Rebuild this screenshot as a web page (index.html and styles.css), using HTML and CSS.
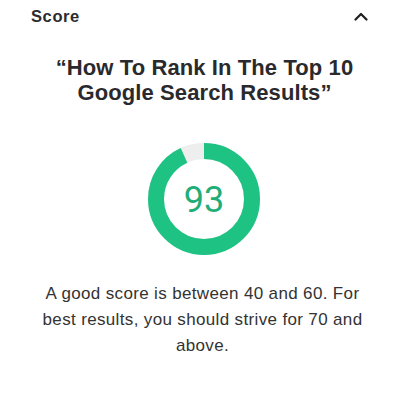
FILE: index.html
```html
<!DOCTYPE html>
<html>
<head>
<meta charset="utf-8">
<link rel="stylesheet" href="styles.css">
</head>
<body>
<div class="panel">
  <div class="header">
    <span class="label">Score</span>
    <svg class="chevron" width="14" height="9" viewBox="0 0 14 9"><path d="M1.5 7.5 L7 2 L12.5 7.5" fill="none" stroke="#1e1e1e" stroke-width="2.2" stroke-linecap="round" stroke-linejoin="round"/></svg>
  </div>
  <h2 class="title">“How To Rank In The Top 10<br>Google Search Results”</h2>
  <div class="gauge">
    <svg width="112" height="112" viewBox="0 0 112 112">
      <circle cx="56" cy="56" r="48" fill="none" stroke="#eeeeee" stroke-width="16"/>
      <circle cx="56" cy="56" r="48" fill="none" stroke="#1ec384" stroke-width="16" stroke-dasharray="280.5 301.6" transform="rotate(-90 56 56)"/>
    </svg>
    <span class="score">93</span>
  </div>
  <p class="note">A good score is between 40 and 60. For best results, you should strive for 70 and above.</p>
</div>
</body>
</html>
```
FILE: styles.css
```css
html, body {
  margin: 0;
  padding: 0;
  background: #ffffff;
}
.panel {
  width: 400px;
  font-family: "Liberation Sans", Arial, sans-serif;
}
.header {
  display: flex;
  justify-content: space-between;
  align-items: center;
  padding: 6px 32px 0 31px;
  height: 20px;
}
.label {
  font-size: 16.5px;
  font-weight: bold;
  letter-spacing: 0.6px;
  color: #2c2c30;
}
.title {
  margin: 29px 0 0 0;
  text-align: center;
  font-size: 22px;
  line-height: 25px;
  font-weight: bold;
  letter-spacing: 0.1px;
  color: #2a2a2e;
  padding-left: 9px;
}
.gauge {
  position: relative;
  width: 112px;
  height: 112px;
  margin: 38px auto 0 auto;
  left: 4px;
}
.gauge svg {
  display: block;
}
.score {
  position: absolute;
  inset: 0;
  display: flex;
  align-items: center;
  justify-content: center;
  font-family: Roboto, sans-serif;
  font-size: 36px;
  color: #1fae78;
  padding-top: 2px;
}
.note {
  margin: 26px 36px 0 36px;
  text-align: center;
  font-size: 17px;
  letter-spacing: 0.35px;
  line-height: 26px;
  color: #333333;
  padding-left: 5px;
}
```
